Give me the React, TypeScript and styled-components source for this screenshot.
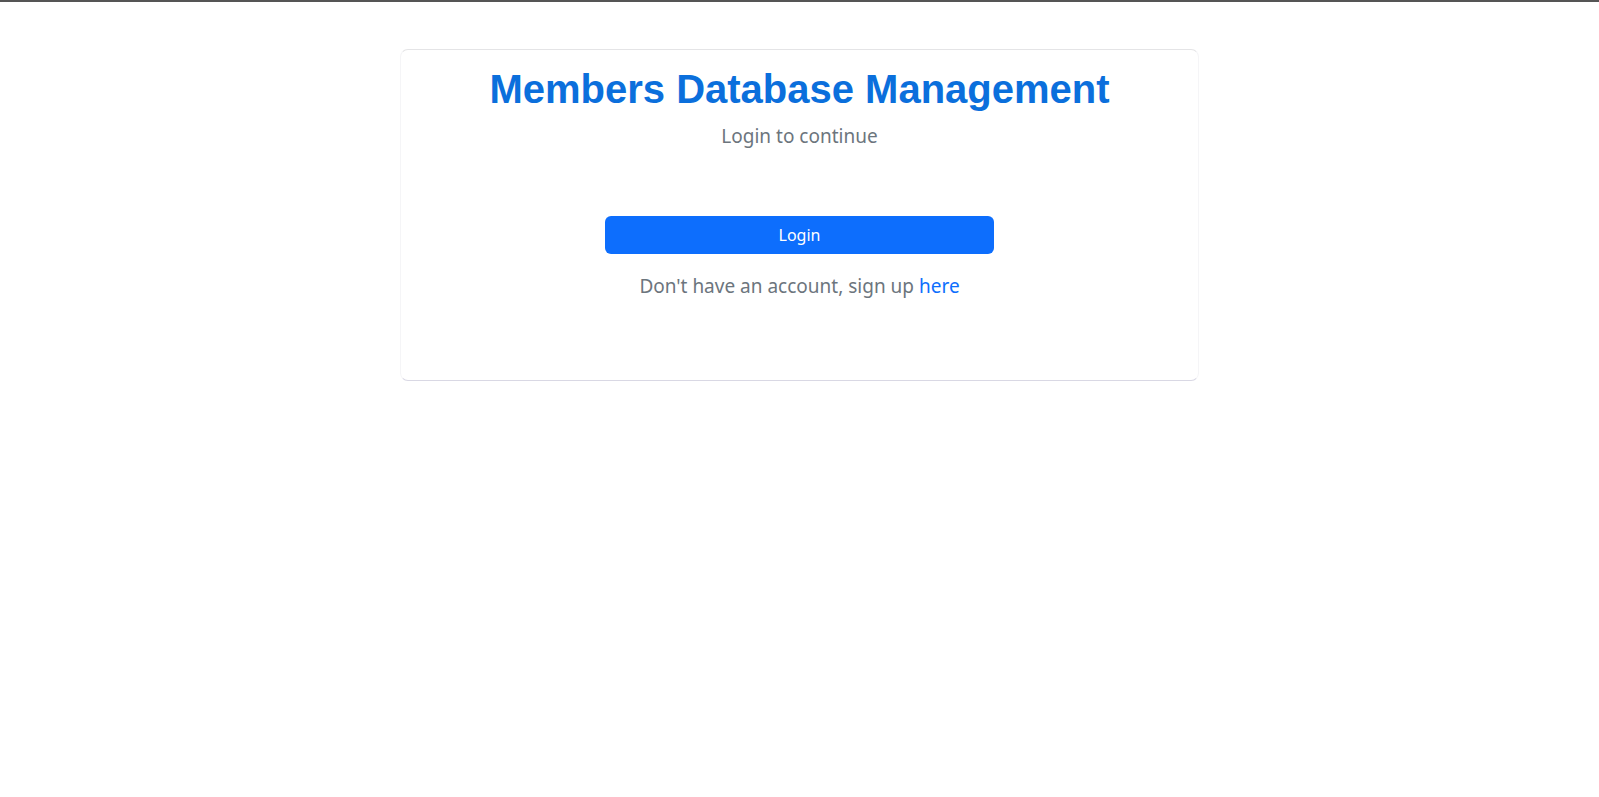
import React from "react";
import styled, { createGlobalStyle } from "styled-components";

const GlobalStyle = createGlobalStyle`
  html, body {
    margin: 0;
    padding: 0;
    background: #ffffff;
  }
  body {
    border-top: 2px solid #555555;
    font-family: "Noto Sans", "DejaVu Sans", sans-serif;
  }
`;

const Page = styled.div`
  padding-top: 47px;
  display: flex;
  justify-content: center;
`;

const Card = styled.div`
  width: 50%;
  height: 332px;
  box-sizing: border-box;
  border: 1px solid #f5f5f7;
  border-top-color: #e4e4e6;
  border-bottom-color: #d9d8e4;
  border-radius: 8px;
  padding-top: 15px;
  display: flex;
  flex-direction: column;
  align-items: center;
`;

const Title = styled.h1`
  margin: 0;
  font-family: "Liberation Sans", Arial, sans-serif;
  font-weight: bold;
  font-size: 40px;
  line-height: 48px;
  color: #0b6fdc;
`;

const Subtitle = styled.p`
  margin: 9px 0 0;
  font-size: 19px;
  line-height: 28px;
  color: #6c757d;
`;

const LoginButton = styled.button`
  margin-top: 66px;
  width: 389px;
  height: 38px;
  border: none;
  border-radius: 6px;
  background: #0d6efd;
  color: #ffffff;
  font-family: "Noto Sans", "DejaVu Sans", sans-serif;
  font-size: 16px;
  cursor: pointer;
`;

const SignUp = styled.p`
  margin: 18px 0 0;
  font-size: 19px;
  line-height: 28px;
  color: #6c757d;
`;

const Link = styled.a`
  color: #0d6efd;
  text-decoration: none;
`;

export default function App() {
  return (
    <>
      <GlobalStyle />
      <Page>
        <Card>
          <Title>Members Database Management</Title>
          <Subtitle>Login to continue</Subtitle>
          <LoginButton type="button">Login</LoginButton>
          <SignUp>
            Don't have an account, sign up <Link href="#">here</Link>
          </SignUp>
        </Card>
      </Page>
    </>
  );
}
